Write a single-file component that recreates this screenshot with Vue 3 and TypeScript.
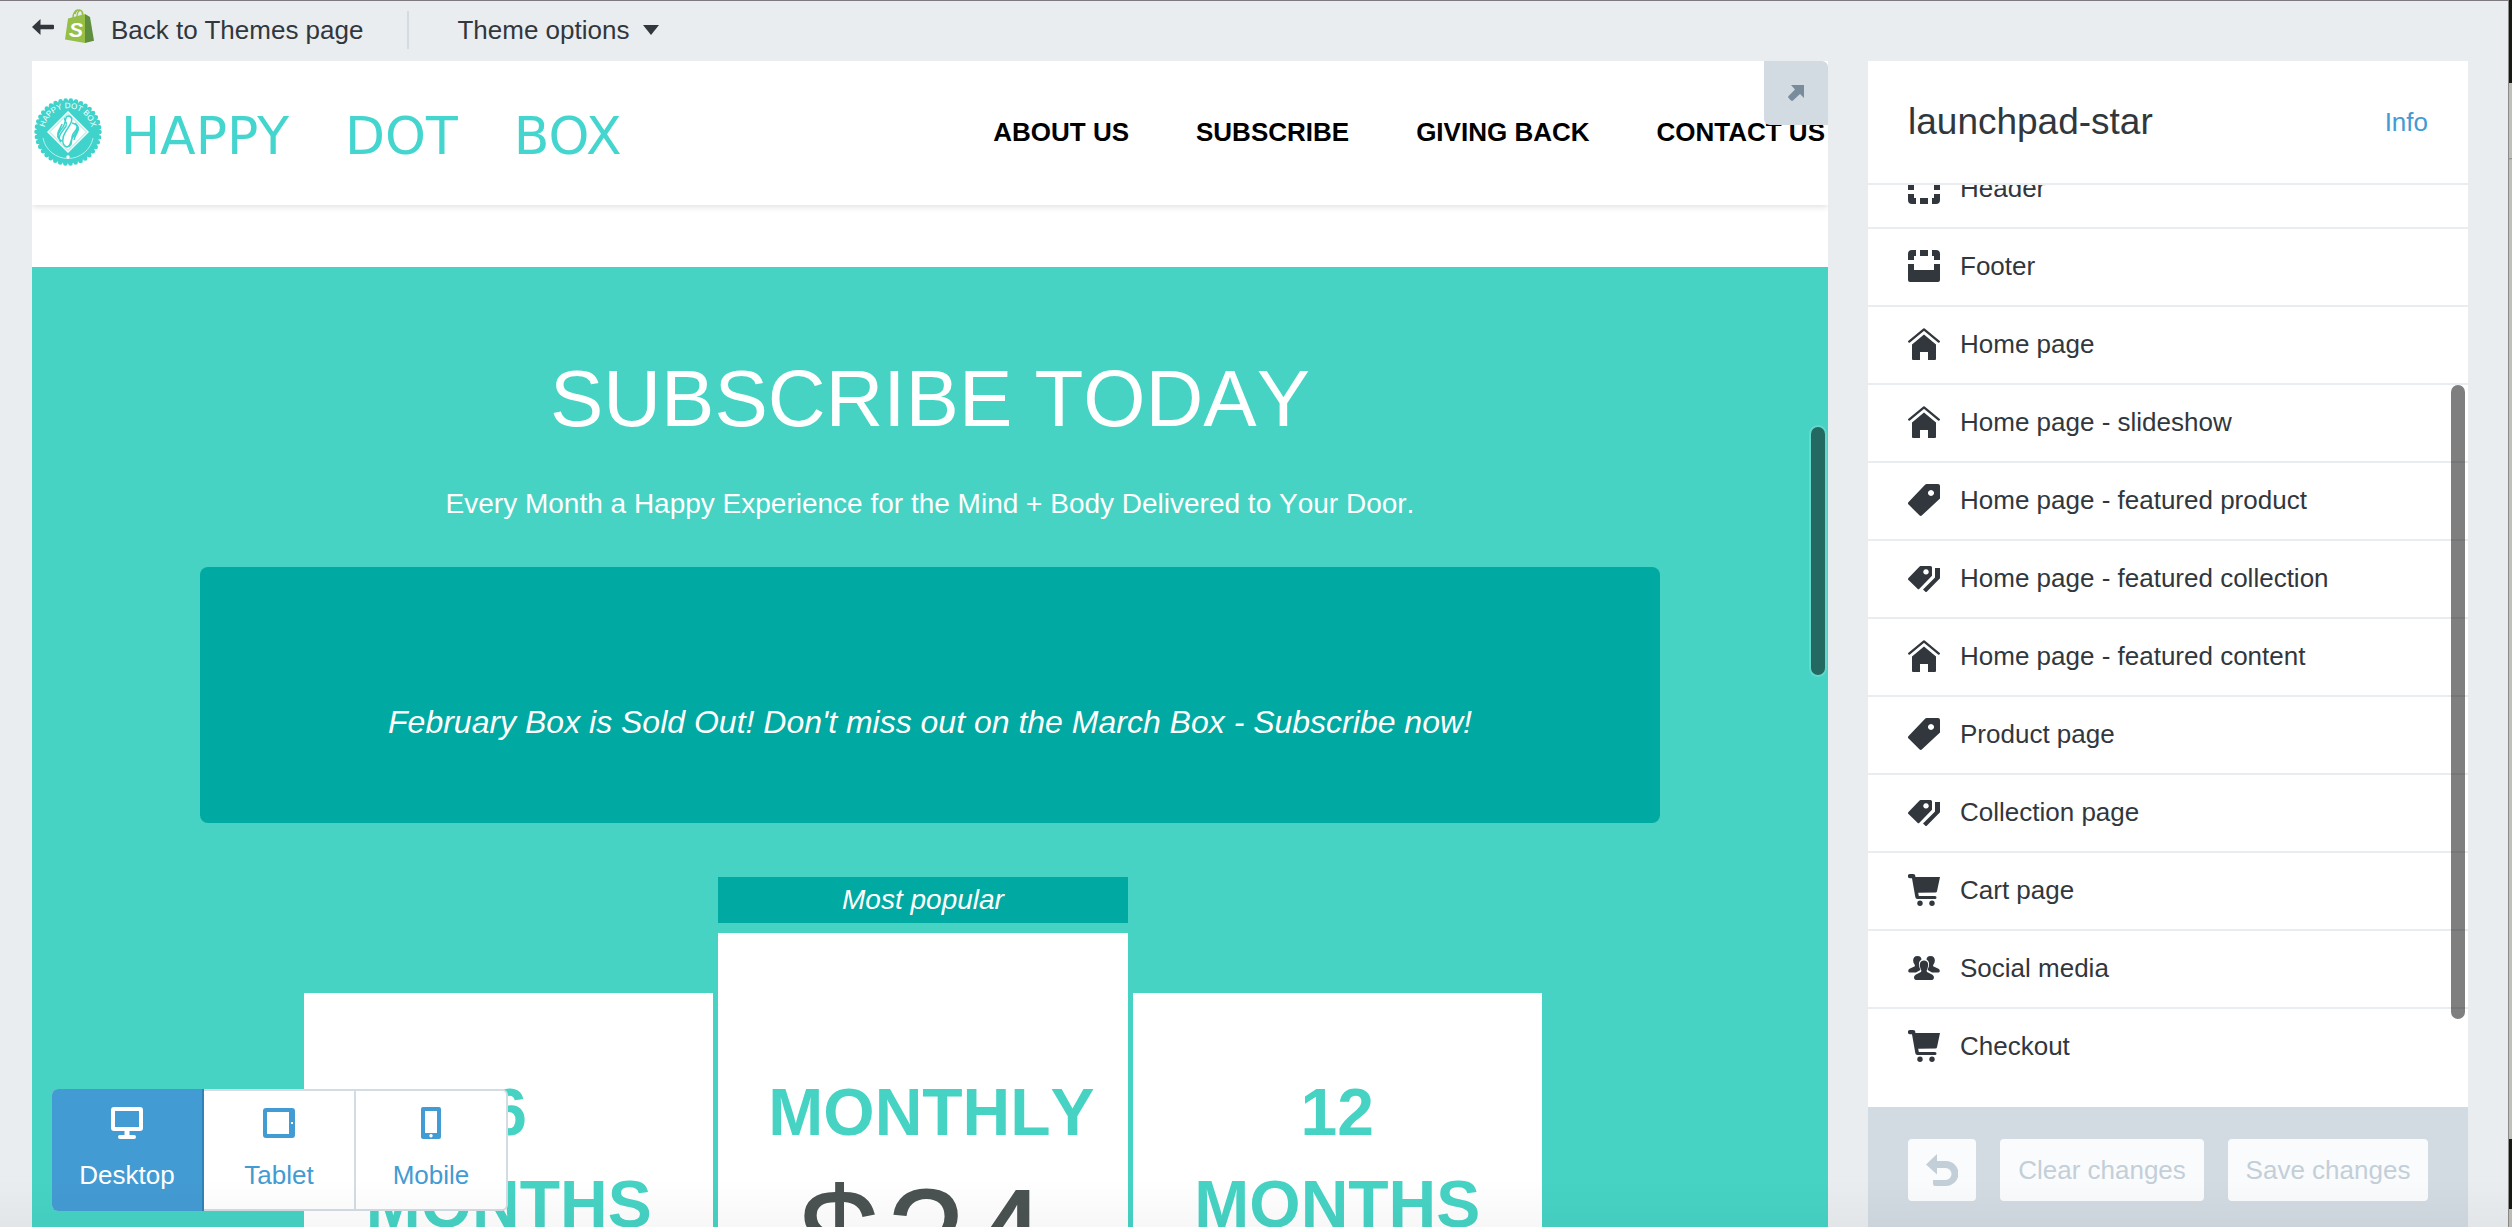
<script setup lang="ts">
import { ref } from 'vue'

interface Section {
  label: string
  icon: string
}

interface Plan {
  name: string
  price?: number
  badge?: string
}

type Device = 'Desktop' | 'Tablet' | 'Mobile'

const menu: string[] = ['ABOUT US', 'SUBSCRIBE', 'GIVING BACK', 'CONTACT US']

const sections: Section[] = [
  { label: 'Header', icon: 'header' },
  { label: 'Footer', icon: 'footer' },
  { label: 'Home page', icon: 'home' },
  { label: 'Home page - slideshow', icon: 'home' },
  { label: 'Home page - featured product', icon: 'tag' },
  { label: 'Home page - featured collection', icon: 'tags' },
  { label: 'Home page - featured content', icon: 'home' },
  { label: 'Product page', icon: 'tag' },
  { label: 'Collection page', icon: 'tags' },
  { label: 'Cart page', icon: 'cart' },
  { label: 'Social media', icon: 'people' },
  { label: 'Checkout', icon: 'cart' },
]

const plans: Plan[] = [
  { name: '6 MONTHS' },
  { name: 'MONTHLY', price: 24, badge: 'Most popular' },
  { name: '12 MONTHS' },
]

const devices: Device[] = ['Desktop', 'Tablet', 'Mobile']
const device = ref<Device>('Desktop')
</script>

<template>
  <svg class="sprite" aria-hidden="true">
    <symbol id="header" viewBox="0 0 32 32">
      <path d="M2 0H30a2 2 0 0 1 2 2V18H26V12H6V18H0V2A2 2 0 0 1 2 0ZM0 22H6V26H8V32H4A4 4 0 0 1 0 28ZM12 26H20V32H12ZM26 22H32V28A4 4 0 0 1 28 32H24V26H26Z" />
    </symbol>
    <symbol id="footer" viewBox="0 0 32 32">
      <path d="M2 32H30a2 2 0 0 0 2-2V14H26V20H6V14H0V30A2 2 0 0 0 2 32ZM0 10H6V6H8V0H4A4 4 0 0 0 0 4ZM12 6H20V0H12ZM26 10H32V4A4 4 0 0 0 28 0H24V6H26Z" />
    </symbol>
    <symbol id="home" viewBox="0 0 32 32">
      <path d="M1.2 13.6 16 1.4 30.800 13.6" fill="none" stroke="currentColor" stroke-width="2.300" stroke-linecap="round" stroke-linejoin="round" />
      <path d="M16 6.600 28 16.500V31a1 1 0 0 1-1 1H20V24H12V32H5a1 1 0 0 1-1-1V16.500Z" />
    </symbol>
    <symbol id="tag" viewBox="0 0 32 32">
      <path fill-rule="evenodd" d="M18.500 0H30a2 2 0 0 1 2 2V14.500L14 31.300a1.800 1.800 0 0 1-2.600 0L.6 20.600a1.800 1.800 0 0 1 0-2.600L17.300.5ZM23 6a3 3 0 1 0 .01 0Z" />
    </symbol>
    <symbol id="tags" viewBox="0 0 32 32">
      <path fill-rule="evenodd" d="M12.500 4H22.500a1.500 1.500 0 0 1 1.500 1.500V13.800L11.400 26.800a1.300 1.300 0 0 1-1.900 0L.5 18a1.300 1.300 0 0 1 0-1.900L11.600 4.400ZM18 7.200a2.700 2.700 0 1 0 .01 0Z" />
      <path d="M27 6H32V16.300L19 29.500a1.300 1.300 0 0 1-1.900 0L15 27.500 27 15.500Z" />
    </symbol>
    <symbol id="cart" viewBox="0 0 32 32">
      <path fill-rule="evenodd" d="M2 0H5A2.500 2.500 0 0 1 7.300 3H32L29 17.200Q28.700 18.400 27.500 18.400L10.200 18.800 10.800 22H27a1.500 1.500 0 0 1 0 3H9.500A2.200 2.200 0 0 1 7.300 23L4 4.200H2A2 2 0 0 1 2 0Z" />
      <circle cx="12" cy="29.300" r="2.700" />
      <circle cx="24" cy="29.300" r="2.700" />
    </symbol>
    <symbol id="people" viewBox="0 0 32 32">
      <path d="M9.500 4c2.700 0 4 1.500 4 3.600-2.300 1.400-2.900 3.800-2.400 6.500.2 1.500 1 2.700 1.300 3.900l-4.400 2.400H1.500C-.3 20.400-.2 17.500 2 16.600L6.400 14.600c.8-.5.600-1.500 0-2.300C4 8.800 5 4 9.500 4Z" />
      <path d="M22.500 4c-2.700 0-4 1.500-4 3.600 2.300 1.400 2.900 3.800 2.400 6.500-.2 1.500-1 2.700-1.300 3.900l4.400 2.400h6.500c1.800 0 1.700-2.900-.5-3.800l-4.400-2c-.8-.5-.6-1.500 0-2.300C28 8.800 27 4 22.500 4Z" />
      <path d="M16 8.600c4.200 0 5 4 3.500 7.800-.6 1.400-1.300 2.300-.4 3.600L24 22.500c3 1.400 2.200 5.500 0 5.500H8c-2.200 0-3-4.100 0-5.500L12.900 20c.9-1.300.2-2.200-.4-3.600C11 12.600 11.800 8.600 16 8.600Z" />
    </symbol>
    <symbol id="Desktop" viewBox="0 0 32 32">
      <path fill-rule="evenodd" d="M3 0H29a3 3 0 0 1 3 3V21a3 3 0 0 1-3 3H18.500V28H23a2 2 0 0 1 0 4H9a2 2 0 0 1 0-4H13.500V24H3a3 3 0 0 1-3-3V3A3 3 0 0 1 3 0ZM4 4V20H28V4Z" />
    </symbol>
    <symbol id="Tablet" viewBox="0 0 32 32">
      <path fill-rule="evenodd" d="M3 1H29a3 3 0 0 1 3 3V28a3 3 0 0 1-3 3H3a3 3 0 0 1-3-3V4A3 3 0 0 1 3 1ZM4 5V27H26V5ZM28 15V17H30V15Z" />
    </symbol>
    <symbol id="Mobile" viewBox="0 0 32 32">
      <path fill-rule="evenodd" d="M8 0H24a2 2 0 0 1 2 2V30a2 2 0 0 1-2 2H8a2 2 0 0 1-2-2V2A2 2 0 0 1 8 0ZM10 4V26H22V4ZM16 27a1.700 1.700 0 1 0 .01 0Z" />
    </symbol>
  </svg>

  <div class="app">
    <div class="workspace">
      <header class="topbar">
        <a class="back" href="#themes">
          <svg class="arrow" width="22" height="16" viewBox="0 0 22 16" aria-hidden="true">
            <path d="M0 8 8.500 0V5.800H21a1 1 0 0 1 1 1V9.200a1 1 0 0 1-1 1H8.500V16Z" />
          </svg>
          <svg class="bag" width="29" height="34" viewBox="0 0 29 34" aria-hidden="true">
            <path d="M8 9C8 4 10.500 1 13 1M12 8C12 4 13.500 1.500 15.500 1.500 17 1.500 17.500 4 17.500 7M10 5C12-1 17 0 18 5" fill="none" stroke="#95bf47" stroke-width="1.400" />
            <path d="M3 9.500 20 5 20 34 0 30.500Z" fill="#95bf47" />
            <path d="M20 5 25 8 29 31.800 20 34Z" fill="#5e8e3e" />
            <text x="4" y="28" font-size="21" font-weight="700" font-style="italic" fill="#fff">S</text>
          </svg>
          Back to Themes page
        </a>
        <button class="options" type="button">
          Theme options
          <svg width="16" height="10" viewBox="0 0 16 10" aria-hidden="true"><path d="M0 0H16L8 10Z" /></svg>
        </button>
      </header>

      <div class="columns">
        <main class="preview">
          <div class="store-header">
            <a class="brand" href="#home">
              <svg width="68" height="68" viewBox="0 0 68 68" aria-hidden="true">
                <circle cx="34" cy="34" r="31.500" fill="#40d3cc" />
                <circle cx="34" cy="34" r="31.500" fill="none" stroke="#40d3cc" stroke-width="4.600" stroke-linecap="round" stroke-dasharray="0 5.210" />
                <path id="ring" d="M10.500 37A23.700 23.700 0 1 1 57.500 37" fill="none" />
                <text font-size="8" fill="#fff"><textPath href="#ring" startOffset="50%" text-anchor="middle">HAPPY DOT BOX</textPath></text>
                <path d="M34 13 55 34 34 55 13 34Z" fill="#fff" />
                <path d="M34 15.500 52.500 34 34 52.500 15.500 34Z" fill="none" stroke="#40d3cc" stroke-width=".6" />
                <path d="M29 43C20 41 25 34 29 29 33 23 30 18 35 18 41 20 36 27 32 33 28 39 27 47 33 49 40 48 36 41 39 36 43 31 45 28 41 25M38 25C47 27 43 34 39 39 35 44 38 48 33 49M27 44C22 39 29 33 32 28 34 23 29 23 31 20M25 41C21 36 27 30 28 26M43 27C47 32 41 36 40 42" fill="none" stroke="#40d3cc" stroke-width="1.500" />
                <path d="M9 40A25.500 25.500 0 0 0 59 40" fill="none" stroke="#b5efec" stroke-width="1" />
                <circle cx="34" cy="59" r="1.700" fill="#fff" />
              </svg>
              <span class="wordmark"><span>HAPPY</span> <span>DOT</span> <span>BOX</span></span>
            </a>
            <nav class="menu">
              <a v-for="item in menu" :key="item" href="#store">{{ item }}</a>
            </nav>
          </div>

          <section class="hero">
            <h1>SUBSCRIBE TODAY</h1>
            <p class="lead">Every Month a Happy Experience for the Mind + Body Delivered to Your Door.</p>
            <p class="notice">February Box is Sold Out! Don't miss out on the March Box - Subscribe now!</p>
            <div class="plans">
              <article v-for="plan in plans" :key="plan.name" class="plan">
                <p v-if="plan.badge" class="badge">{{ plan.badge }}</p>
                <div class="card" :class="{ featured: plan.badge }">
                  <h2>{{ plan.name }}</h2>
                  <p v-if="plan.price" class="price"><span>$</span><span>{{ plan.price }}</span></p>
                </div>
              </article>
            </div>
          </section>

          <button class="expand" type="button" aria-label="Expand preview">
            <svg width="16" height="16" viewBox="0 0 16 16" aria-hidden="true">
              <path d="M3 0H16V13L12 9 5 15.500A1.500 1.500 0 0 1 3 15.500L.6 13A1.500 1.500 0 0 1 .6 11L7 4.500Z" />
            </svg>
          </button>
          <span class="thumb preview-thumb"></span>
          <div class="devices" role="group" aria-label="Preview size">
            <button
              v-for="name in devices"
              :key="name"
              type="button"
              :class="{ active: device === name }"
              :aria-pressed="device === name"
              @click="device = name"
            >
              <svg class="icon" aria-hidden="true"><use :href="`#${name}`" /></svg>
              {{ name }}
            </button>
          </div>
        </main>

        <aside class="sidebar">
          <div class="title">
            <h2>launchpad-star</h2>
            <a href="#info">Info</a>
          </div>
          <div class="scroller">
            <ul>
              <li v-for="section in sections" :key="section.label">
                <button type="button">
                  <svg class="icon" aria-hidden="true"><use :href="`#${section.icon}`" /></svg>
                  {{ section.label }}
                </button>
              </li>
            </ul>
            <span class="thumb list-thumb"></span>
          </div>
          <footer class="actions">
            <button type="button" class="undo" disabled aria-label="Undo">
              <svg class="icon" viewBox="0 0 32 32" aria-hidden="true">
                <path d="M0 10.500 11 0V7H20A12.500 12.500 0 0 1 20 32H9a2 2 0 0 1-2-2V26H19.500A6 6 0 0 0 19.500 14H11V20.500Z" />
              </svg>
            </button>
            <button type="button" disabled>Clear changes</button>
            <button type="button" disabled>Save changes</button>
          </footer>
        </aside>
      </div>
    </div>
    <div class="edge"></div>
    <div class="shade"></div>
  </div>
</template>

<style>
body {
  margin: 0;
  overflow: hidden;
}
</style>

<style scoped>
* {
  box-sizing: border-box;
}
h1,
h2,
p,
ul {
  margin: 0;
  padding: 0;
}
button {
  font: inherit;
  color: inherit;
  border: 0;
  padding: 0;
  background: none;
}
a {
  color: inherit;
  text-decoration: none;
}
svg {
  display: block;
  fill: currentColor;
  flex: none;
}
.sprite {
  position: absolute;
  width: 0;
  height: 0;
}
.icon {
  width: 32px;
  height: 32px;
}
.app {
  position: relative;
  display: flex;
  height: 100vh;
  background: #e9edf0;
  font-family: "Liberation Sans", Arial, sans-serif;
  font-size: 26px;
  line-height: 32px;
  color: #31373d;
}
.workspace {
  flex: 1;
  min-width: 0;
  display: flex;
  flex-direction: column;
  border-top: 1px solid #7d797e;
}
.edge {
  width: 4px;
  border-left: 1px solid #8b8b89;
  background: linear-gradient(#161a12 83px, #bfbeb9 83px, #bfbeb9 158px, #8b8b89 158px, #bfbeb9 160px, #bfbeb9 1139px, #161a12 1139px, #161a12 1209px, #bfbeb9 1209px);
}
.shade {
  position: absolute;
  inset: auto 0 0;
  height: 48px;
  background: linear-gradient(rgba(0, 0, 0, 0), rgba(0, 0, 0, 0.03));
  pointer-events: none;
}
.topbar {
  display: flex;
  align-items: center;
  height: 60px;
  padding: 0 32px 2px;
}
.back {
  display: flex;
  align-items: center;
}
.arrow {
  margin: 0 11px 6px 0;
}
.bag {
  margin: 0 17px 8px 0;
}
.options {
  display: flex;
  align-items: center;
  gap: 14px;
  height: 38px;
  margin-left: 44px;
  padding-left: 48px;
  border-left: 2px solid #d3dae0;
}
.columns {
  flex: 1;
  min-height: 0;
  display: flex;
  gap: 40px;
  padding: 0 40px 0 32px;
}
.preview {
  position: relative;
  flex: 1;
  min-width: 0;
  overflow: hidden;
  background: #fff;
}
.store-header {
  display: flex;
  align-items: center;
  justify-content: space-between;
  height: 144px;
  padding: 0 3px 2px 2px;
  box-shadow: 0 2px 6px rgba(0, 0, 0, 0.12);
}
.brand {
  display: flex;
  align-items: center;
  gap: 19px;
  color: #43d5ce;
}
.wordmark {
  display: flex;
  gap: 56px;
  padding-top: 8px;
  font: 52px/64px "DejaVu Sans", sans-serif;
}
.menu {
  display: flex;
  gap: 67px;
  font-weight: 700;
  color: #000;
  white-space: nowrap;
}
.hero {
  margin-top: 62px;
  padding: 84px 168px 0;
  background: #46d3c4;
  color: #fff;
  text-align: center;
  font-kerning: none;
}
h1 {
  font-size: 80px;
  font-weight: 400;
  line-height: 96px;
}
.lead {
  margin-top: 36px;
  font-size: 28px;
  line-height: 42px;
}
.notice {
  margin-top: 42px;
  padding: 131px 24px 77px;
  border-radius: 8px;
  background: #00a9a2;
  font-size: 32px;
  font-style: italic;
  font-kerning: normal;
  line-height: 48px;
}
.plans {
  display: grid;
  grid-template-columns: repeat(3, minmax(0, 1fr));
  align-items: end;
  gap: 5px;
  margin-top: 54px;
  padding: 0 118px 0 104px;
}
.badge {
  margin-bottom: 10px;
  background: #00a9a2;
  font-size: 28px;
  font-style: italic;
  line-height: 46px;
}
.card {
  height: 400px;
  padding: 73px 50px 0;
  background: #fff;
}
.featured {
  height: 460px;
  padding-top: 133px;
}
.card h2 {
  font-size: 66px;
  line-height: 92px;
  color: #46d3c4;
}
.price {
  display: flex;
  justify-content: center;
  gap: 6px;
  font-size: 146px;
  line-height: 166px;
  color: #4a5351;
}
.expand {
  position: absolute;
  top: 0;
  right: 0;
  display: grid;
  place-items: center;
  width: 64px;
  height: 64px;
  border-radius: 0 6px 0 6px;
  background: #d2dae2;
  color: #798c9c;
}
.thumb {
  position: absolute;
  width: 14px;
  border-radius: 7px;
  background: rgba(0, 0, 0, 0.5);
}
.preview-thumb {
  top: 366px;
  right: 3px;
  height: 248px;
  box-shadow: 0 0 0 2px rgba(255, 255, 255, 0.15);
}
.devices {
  position: absolute;
  left: 20px;
  bottom: 16px;
  display: flex;
  height: 122px;
  border: 2px solid #d2dce4;
  border-radius: 6px;
  background: #fff;
  color: #439bd3;
}
.devices button {
  display: flex;
  flex-direction: column;
  align-items: center;
  justify-content: space-between;
  width: 152px;
  padding: 16px 0 18px;
  border-right: 2px solid #d2dce4;
}
.devices button:last-child {
  width: 150px;
  border-right: 0;
}
.devices .active {
  margin: -2px 0 -2px -2px;
  padding: 18px 0 20px;
  border-right-color: #3182b8;
  border-radius: 6px 0 0 6px;
  background: #439bd3;
  color: #fff;
}
.sidebar {
  display: flex;
  flex-direction: column;
  width: 600px;
  background: #fff;
}
.title {
  display: flex;
  align-items: center;
  justify-content: space-between;
  height: 124px;
  padding: 0 40px;
  border-bottom: 2px solid #e9edf0;
}
.title h2 {
  font-size: 37px;
  font-weight: 400;
  line-height: 48px;
}
.title a {
  color: #439bd3;
}
.scroller {
  position: relative;
  flex: 1;
  min-height: 0;
  display: flex;
  flex-direction: column;
  justify-content: flex-end;
  overflow: hidden;
}
.scroller ul {
  list-style: none;
  padding-bottom: 20px;
}
.scroller button {
  display: flex;
  align-items: center;
  gap: 20px;
  width: 100%;
  height: 78px;
  padding: 0 40px 2px;
  border-bottom: 2px solid #e9edf0;
  text-align: left;
}
.scroller li:last-child button {
  border-bottom-color: #fff;
}
.list-thumb {
  top: 200px;
  right: 3px;
  height: 634px;
}
.actions {
  display: flex;
  gap: 24px;
  height: 120px;
  padding: 32px 40px 26px;
  background: #d2dae2;
}
.actions button {
  flex: 204;
  border-radius: 4px;
  background: #fafbfd;
  color: #c3cfd8;
  white-space: nowrap;
}
.actions button:last-child {
  flex: 200;
}
.actions .undo {
  display: grid;
  place-items: center;
  flex: 0 0 68px;
}
</style>
